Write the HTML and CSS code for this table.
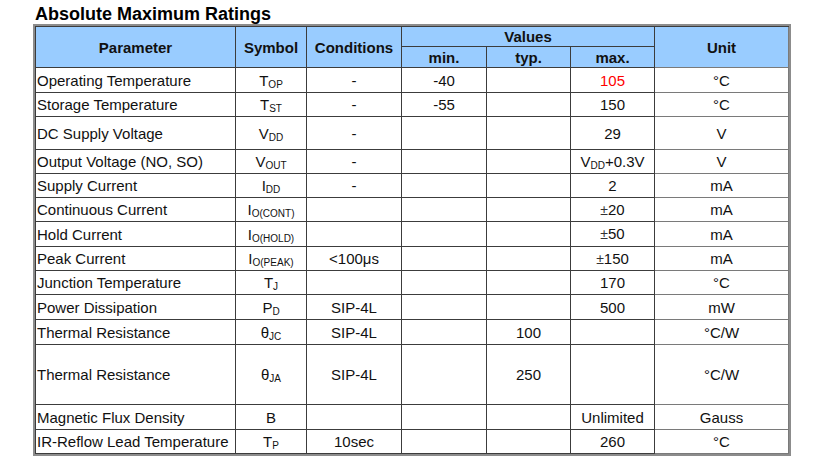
FILE: index.html
```html
<!DOCTYPE html>
<html>
<head>
<meta charset="utf-8">
<link rel="stylesheet" href="styles.css">
</head>
<body>
<div class="page">
  <h1 class="title">Absolute Maximum Ratings</h1>
  <div class="frame">
    <table class="ratings">
      <colgroup>
        <col class="c-param"><col class="c-sym"><col class="c-cond"><col class="c-val"><col class="c-val2"><col class="c-val2"><col class="c-unit">
      </colgroup>
      <thead>
        <tr class="h1">
          <th rowspan="2">Parameter</th>
          <th rowspan="2">Symbol</th>
          <th rowspan="2">Conditions</th>
          <th colspan="3">Values</th>
          <th rowspan="2" class="u">Unit</th>
        </tr>
        <tr class="h2">
          <th>min.</th>
          <th>typ.</th>
          <th>max.</th>
        </tr>
      </thead>
      <tbody>
        <tr class="r25"><td class="p">Operating Temperature</td><td>T<sub>OP</sub></td><td>-</td><td>-40</td><td></td><td class="red">105</td><td class="u">°C</td></tr>
        <tr class="r24"><td class="p">Storage Temperature</td><td>T<sub>ST</sub></td><td>-</td><td>-55</td><td></td><td>150</td><td class="u">°C</td></tr>
        <tr class="r33"><td class="p">DC Supply Voltage</td><td>V<sub>DD</sub></td><td>-</td><td></td><td></td><td>29</td><td class="u">V</td></tr>
        <tr class="r24"><td class="p">Output Voltage (NO, SO)</td><td>V<sub>OUT</sub></td><td>-</td><td></td><td></td><td>V<sub>DD</sub>+0.3V</td><td class="u">V</td></tr>
        <tr class="r24"><td class="p">Supply Current</td><td>I<sub>DD</sub></td><td>-</td><td></td><td></td><td>2</td><td class="u">mA</td></tr>
        <tr class="r24"><td class="p">Continuous Current</td><td>I<sub>O(CONT)</sub></td><td></td><td></td><td></td><td><span class="pm">±</span>20</td><td class="u">mA</td></tr>
        <tr class="r25"><td class="p">Hold Current</td><td>I<sub>O(HOLD)</sub></td><td></td><td></td><td></td><td><span class="pm">±</span>50</td><td class="u">mA</td></tr>
        <tr class="r24"><td class="p">Peak Current</td><td>I<sub>O(PEAK)</sub></td><td>&lt;100μs</td><td></td><td></td><td><span class="pm">±</span>150</td><td class="u">mA</td></tr>
        <tr class="r24"><td class="p">Junction Temperature</td><td>T<sub>J</sub></td><td></td><td></td><td></td><td>170</td><td class="u">°C</td></tr>
        <tr class="r25"><td class="p">Power Dissipation</td><td>P<sub>D</sub></td><td>SIP-4L</td><td></td><td></td><td>500</td><td class="u">mW</td></tr>
        <tr class="r25"><td class="p">Thermal Resistance</td><td>θ<sub>JC</sub></td><td>SIP-4L</td><td></td><td>100</td><td></td><td class="u">°C/W</td></tr>
        <tr class="r60"><td class="p">Thermal Resistance</td><td>θ<sub>JA</sub></td><td>SIP-4L</td><td></td><td>250</td><td></td><td class="u">°C/W</td></tr>
        <tr class="r25"><td class="p">Magnetic Flux Density</td><td>B</td><td></td><td></td><td></td><td>Unlimited</td><td class="u">Gauss</td></tr>
        <tr class="r24"><td class="p">IR-Reflow Lead Temperature</td><td>T<sub>P</sub></td><td>10sec</td><td></td><td></td><td>260</td><td class="u">°C</td></tr>
      </tbody>
    </table>
  </div>
</div>
</body>
</html>
```

FILE: styles.css
```css
html, body {
  margin: 0;
  padding: 0;
  background: #ffffff;
}

.page {
  padding: 4px 0 0 33px;
  font-family: "Liberation Sans", Arial, sans-serif;
  color: #111111;
}

.title {
  margin: 0 0 0 2px;
  font-size: 18px;
  line-height: 20px;
  height: 20px;
  font-weight: bold;
  color: #000000;
}

.frame {
  width: 754px;
  border: 2px solid #8c8c8c;
}

.ratings {
  width: 754px;
  table-layout: fixed;
  border-collapse: separate;
  border-spacing: 0;
  border-top: 1px solid #3c3c3c;
  border-left: 1px solid #3c3c3c;
  font-size: 15px;
}

.c-param { width: 200px; }
.c-sym { width: 71px; }
.c-cond { width: 95px; }
.c-val { width: 85px; }
.c-val2 { width: 84px; }
.c-unit { width: 134px; }

.ratings th,
.ratings td {
  box-sizing: border-box;
  padding: 0;
  border-right: 1px solid #3c3c3c;
  border-bottom: 1px solid #3c3c3c;
  text-align: center;
  vertical-align: middle;
  line-height: 17px;
  white-space: nowrap;
  overflow: hidden;
}

.ratings th {
  background: #99ccff;
  font-weight: bold;
  color: #111111;
}

.ratings .u {
  border-right-color: #7a7a7a;
  border-bottom-color: #7a7a7a;
}

.ratings td.p {
  text-align: left;
  padding-left: 1px;
}

.h1 { height: 20px; }
.h2 { height: 21px; }
.r24 { height: 24px; }
.r25 { height: 25px; }
.r33 { height: 33px; }
.r60 { height: 60px; }

.ratings sub {
  font-size: 10px;
  line-height: 0;
  vertical-align: -2px;
}

.red {
  color: #ff0000;
}

.pm {
  font-size: 14px;
  color: #333333;
}
```
